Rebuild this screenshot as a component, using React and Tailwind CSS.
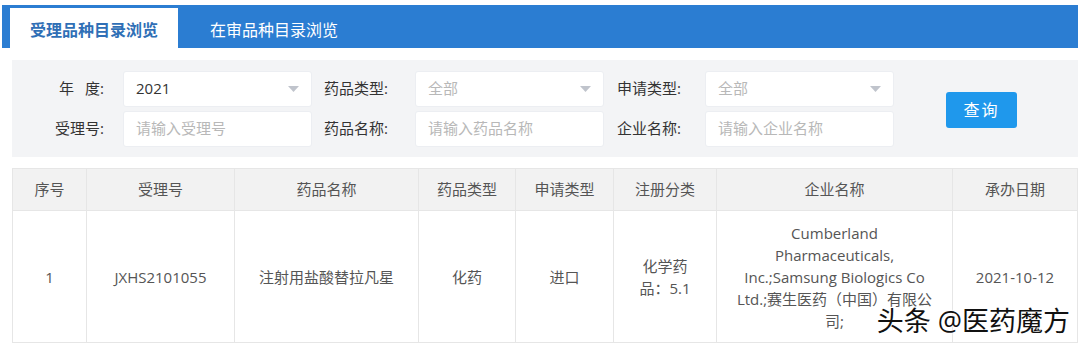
import React from "react";

const font = { fontFamily: '"Open Sans", "Noto Sans CJK SC", sans-serif' };

function Caret() {
  return (
    <svg width="11" height="6" viewBox="0 0 11 6" className="shrink-0">
      <path d="M0 0 L11 0 L5.5 6 Z" fill="#c0c4cc" />
    </svg>
  );
}

function Select({ value, placeholder }) {
  return (
    <div className="w-[189px] h-[36px] bg-white border border-[#eceef2] rounded-[3px] flex items-center justify-between pl-[12px] pr-[12px]">
      <span className={value ? "text-[#333]" : "text-[#b8b8b8]"}>{value || placeholder}</span>
      <Caret />
    </div>
  );
}

function Input({ placeholder }) {
  return (
    <div className="w-[189px] h-[36px] bg-white border border-[#eceef2] rounded-[3px] flex items-center pl-[12px] text-[#b8b8b8]">
      {placeholder}
    </div>
  );
}

const cols = [
  { title: "序号", w: "w-[74px]" },
  { title: "受理号", w: "w-[148px]" },
  { title: "药品名称", w: "w-[184px]" },
  { title: "药品类型", w: "w-[97px]" },
  { title: "申请类型", w: "w-[98px]" },
  { title: "注册分类", w: "w-[103px]" },
  { title: "企业名称", w: "w-[236px]" },
  { title: "承办日期", w: "flex-1" },
];

export default function App() {
  const row = [
    "1",
    "JXHS2101055",
    "注射用盐酸替拉凡星",
    "化药",
    "进口",
    <>
      <span className="block">化学药</span>
      <span className="block">品：5.1</span>
    </>,
    <>
      <span className="block">Cumberland</span>
      <span className="block">Pharmaceuticals,</span>
      <span className="block">Inc.;Samsung Biologics Co</span>
      <span className="block">Ltd.;赛生医药（中国）有限公</span>
      <span className="block">司;</span>
    </>,
    "2021-10-12",
  ];

  return (
    <div className="relative w-[1080px] h-[344px] bg-white overflow-hidden" style={font}>
      {/* Tabs */}
      <div className="pt-[5px] px-[2px]">
        <div className="h-[43px] bg-[#2b7dd2] flex items-end pl-[8px]">
          <div className="w-[168px] h-[40px] bg-white flex items-center justify-center pt-[3px] text-[16px] font-semibold text-[#2f6fb6]">
            受理品种目录浏览
          </div>
          <div className="w-[192px] h-[40px] flex items-center justify-center pt-[3px] text-[16px] text-white">
            在审品种目录浏览
          </div>
        </div>
      </div>

      {/* Filters */}
      <div className="mt-[12px] ml-[12px] mr-[2px] h-[97px] bg-[#f3f4f6] flex items-center text-[15px] text-[#333]">
        <div className="flex flex-col gap-[4px]">
          <div className="flex items-center">
            <div className="w-[111px] text-right pr-[19px]">
              年<span className="ml-[11px]">度:</span>
            </div>
            <Select value="2021" />
            <div className="w-[103px] pl-[12px]">药品类型:</div>
            <Select placeholder="全部" />
            <div className="w-[101px] pl-[13px]">申请类型:</div>
            <Select placeholder="全部" />
          </div>
          <div className="flex items-center">
            <div className="w-[111px] text-right pr-[19px]">受理号:</div>
            <Input placeholder="请输入受理号" />
            <div className="w-[103px] pl-[12px]">药品名称:</div>
            <Input placeholder="请输入药品名称" />
            <div className="w-[101px] pl-[13px]">企业名称:</div>
            <Input placeholder="请输入企业名称" />
          </div>
        </div>
        <button className="ml-[52px] mt-[2px] w-[71px] h-[36px] bg-[#1f98ec] text-white text-[16px] rounded-[3px] tracking-[2px]">
          查询
        </button>
      </div>

      {/* Table */}
      <div className="mt-[11px] ml-[12px] mr-[2px] border-l border-t border-[#e6e6e6] text-[15px] text-[#555]">
        <div className="flex h-[42px] bg-[#f2f2f2] border-b border-[#e6e6e6]">
          {cols.map((c) => (
            <div key={c.title} className={`${c.w} flex items-center justify-center border-r border-[#e6e6e6]`}>
              {c.title}
            </div>
          ))}
        </div>
        <div className="flex h-[132px] border-b border-[#e6e6e6]">
          {cols.map((c, i) => (
            <div
              key={c.title}
              className={`${c.w} flex flex-col items-center justify-center text-center leading-[22px] border-r border-[#e6e6e6]`}
            >
              {row[i]}
            </div>
          ))}
        </div>
      </div>

      {/* Watermark */}
      <div
        className="absolute right-[10px] bottom-[10px] text-[27px] leading-none text-[#111]"
        style={{ textShadow: "0 0 2px #fff, 0 0 2px #fff, 0 0 3px #fff" }}
      >
        头条 @医药魔方
      </div>
    </div>
  );
}
